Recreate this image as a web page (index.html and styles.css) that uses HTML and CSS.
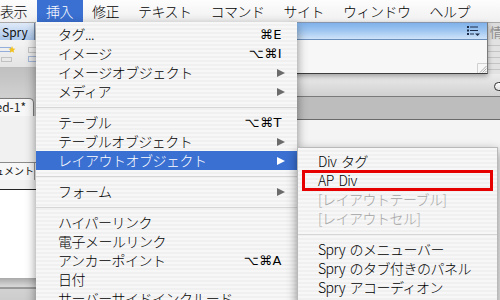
FILE: index.html
```html
<!doctype html>
<html>
<head>
<title>挿入メニュー</title>
<meta charset="utf-8">
<link rel="stylesheet" href="styles.css">
</head>
<body>
<div class="screen">
	<div class="menubar">
		<span>表示</span>
		<span class="on">挿入</span>
		<span>修正</span>
		<span>テキスト</span>
		<span>コマンド</span>
		<span>サイト</span>
		<span>ウィンドウ</span>
		<span>ヘルプ</span>
	</div>

	<div class="workspace">
		<div class="docside">
			<div class="insertbar"><span class="tab">Spry</span></div>
			<div class="tools">
				<svg width="40" height="18" viewBox="0 0 40 18">
					<rect x="-2.5" y="1.5" width="13" height="4" fill="none" stroke="#3a6ec8" stroke-dasharray="1 1"/>
					<path d="M12 0 l1 2.4 2.5 .3 -1.9 1.6 .6 2.5 -2.2 -1.3 -2.2 1.3 .6 -2.5 -1.9 -1.6 2.5 -.3z" fill="#f2c21e"/>
					<rect x="1.5" y="11.5" width="10" height="4" fill="none" stroke="#9a9a9a" stroke-dasharray="1 1"/>
					<rect x="28.5" y="1.5" width="11" height="5" fill="none" stroke="#9a9a9a" stroke-dasharray="1 1"/>
					<rect x="28.5" y="10.5" width="11" height="5" fill="none" stroke="#5b80c2" stroke-dasharray="1 1"/>
				</svg>
			</div>
			<div class="grayband"></div>
			<div class="doctabs"><span class="doctab">Untitled-1*</span></div>
			<div class="docbar"></div>
			<div class="titlebox"><span>ドキュメント</span></div>
			<div class="docgap"></div>
			<div class="docview"></div>
			<div class="status"></div>
		</div>

		<div class="panelside">
			<div class="phead"><span>情報</span></div>
			<div class="plines"></div>
			<div class="ptools"><span class="pill"></span></div>
			<div class="pdark"></div>
			<div class="prest"></div>
		</div>
	</div>

	<div class="floatpanel">
		<div class="fp-title">
			<svg width="14" height="10" viewBox="0 0 14 10">
				<rect x="0" y="0" width="2" height="2" fill="#1c2c48"/>
				<rect x="3" y="0.5" width="8" height="1" fill="#1c2c48"/>
				<rect x="0" y="3.5" width="2" height="2" fill="#1c2c48"/>
				<rect x="3" y="4" width="8" height="1" fill="#1c2c48"/>
				<rect x="0" y="7" width="2" height="2" fill="#1c2c48"/>
				<rect x="3" y="7.5" width="4" height="1" fill="#1c2c48"/>
				<path d="M8 7.5 h5 l-2.5 2.5z" fill="#1c2c48"/>
			</svg>
		</div>
		<div class="fp-body">
			<svg class="grip" width="10" height="10" viewBox="0 0 10 10">
				<path d="M0.5 10 V0.5 H10" fill="none" stroke="#d0d0d0"/>
				<path d="M3 9.5 L9.5 3 M5.5 9.5 L9.5 5.5 M8 9.5 L9.5 8" stroke="#9a9a9a" stroke-width="0.8"/>
			</svg>
		</div>
	</div>

	<div class="menu main">
		<div class="item">タグ...<span class="key">⌘E</span></div>
		<div class="item">イメージ<span class="key">⌥⌘I</span></div>
		<div class="item">イメージオブジェクト<span class="arrow"></span></div>
		<div class="item">メディア<span class="arrow"></span></div>
		<div class="sep"></div>
		<div class="item">テーブル<span class="key">⌥⌘T</span></div>
		<div class="item">テーブルオブジェクト<span class="arrow"></span></div>
		<div class="item sel">レイアウトオブジェクト<span class="arrow"></span></div>
		<div class="sep"></div>
		<div class="item">フォーム<span class="arrow"></span></div>
		<div class="sep"></div>
		<div class="item">ハイパーリンク</div>
		<div class="item">電子メールリンク</div>
		<div class="item">アンカーポイント<span class="key">⌥⌘A</span></div>
		<div class="item">日付</div>
		<div class="item">サーバーサイドインクルード</div>
	</div>

	<div class="menu sub">
		<div class="item">Div タグ</div>
		<div class="item marked">AP Div</div>
		<div class="item off">[レイアウトテーブル]</div>
		<div class="item off">[レイアウトセル]</div>
		<div class="sep"></div>
		<div class="item">Spry のメニューバー</div>
		<div class="item">Spry のタブ付きのパネル</div>
		<div class="item">Spry アコーディオン</div>
		<div class="item">Spry 折りたたみパネル</div>
	</div>
</div>
</body>
</html>
```

FILE: styles.css
```css
html,body{margin:0;padding:0;}
body{width:500px;height:300px;overflow:hidden;font-family:"Noto Sans CJK JP",sans-serif;background:#d6d6d6;}

.screen{position:relative;width:500px;height:300px;overflow:hidden;display:flex;flex-direction:column;}

/* menu bar */
.menubar{flex:none;height:22px;display:flex;background:linear-gradient(#fdfdfd,#f0f0f0);border-bottom:1px solid #a9a9a9;font-size:14px;font-weight:300;letter-spacing:-0.5px;line-height:22px;color:#000;white-space:nowrap;}
.menubar span{padding:0 9.5px;}
.menubar span:first-child{margin-left:-9.5px;}
.menubar .on{background:#3a70d2;color:#fff;}

.workspace{flex:1;min-height:0;display:grid;grid-template-columns:290px 1fr;}

/* document side */
.docside{display:flex;flex-direction:column;min-height:0;}
.insertbar{flex:none;height:17px;display:flex;background:#cfcfcf;}
.insertbar .tab{width:32px;padding-left:2px;background:linear-gradient(#dfeaf8,#a8c5ea);border-right:1px solid #6c83a4;font-size:12px;line-height:17px;color:#111;}
.tools{flex:none;height:28px;box-sizing:border-box;padding-top:6px;background:linear-gradient(#f4f4f4,#e4e4e4);border-bottom:1px solid #bdbdbd;}
.tools svg{display:block;}
.grayband{flex:none;height:29px;background:linear-gradient(#c0c0c0,#d0d0d0);}
.doctabs{flex:none;height:19px;display:flex;align-items:flex-end;background:#cdcdcd;}
.doctab{width:34px;height:18px;box-sizing:border-box;padding-right:7px;display:flex;justify-content:flex-end;overflow:hidden;white-space:nowrap;background:#f7f7f7;border-top:1px solid #7c7c7c;border-right:1px solid #7c7c7c;border-top-right-radius:5px;font-size:12px;line-height:16px;color:#222;}
.docbar{flex:none;height:46px;background:#f1f1f1;}
.titlebox{flex:none;height:18px;box-sizing:border-box;border-top:1px solid #8a8a8a;background:#f7f7f7;display:flex;}
.titlebox span{width:34px;display:flex;justify-content:flex-end;overflow:hidden;white-space:nowrap;font-size:10px;line-height:16px;color:#111;border-right:1px solid #9a9a9a;}
.docgap{flex:none;height:9px;background:#f1f1f1;}
.docview{flex:none;height:88px;background:#fff;border-top:1px solid #222;}
.status{flex:1;background:linear-gradient(#a9a9a9,#d6d6d6 8px,#d6d6d6 9px,#5e5e5e 10px,#d2d2d2 11px,#cdcdcd);}

/* panel side */
.panelside{display:flex;flex-direction:column;min-height:0;}
.phead{flex:none;height:17px;background:#dcdcdc;font-size:13px;line-height:17px;color:#8d8d8d;white-space:nowrap;overflow:hidden;}
.phead span{padding-left:200px;}
.plines{flex:none;height:34px;background:repeating-linear-gradient(#e2e2e2 0 5px,#c4c4c4 5px 6px);}
.ptools{flex:none;height:22px;display:flex;justify-content:flex-end;align-items:center;background:linear-gradient(#ececec,#d0d0d0);}
.pill{width:19px;height:9px;box-sizing:border-box;margin:3px 3px 0 0;border:1.5px solid #333;border-radius:5px;background:linear-gradient(#fff,#ddd);}
.pdark{flex:none;height:22px;background:#bdbdbd;border-top:1px solid #7a7a7a;border-bottom:1px solid #6a6a6a;}
.prest{flex:1;background:#f4f4f4;}

/* floating panel */
.floatpanel{position:absolute;left:290px;top:22px;width:198px;height:52px;box-sizing:border-box;display:flex;flex-direction:column;border-top:1px solid #8796ad;border-right:1px solid #7a7a7a;border-bottom:1px solid #3c3c3c;box-shadow:0 2px 5px rgba(0,0,0,0.35);}
.fp-title{flex:none;height:17px;box-sizing:border-box;display:flex;justify-content:flex-end;align-items:center;padding-right:6px;background:linear-gradient(#7fb1ea,#9cc4f0 45%,#cfe3f9);border-bottom:1px solid #6b8fbb;}
.fp-body{flex:1;display:flex;justify-content:flex-end;align-items:flex-end;background:#f7f7f7;}
.grip{display:block;}

/* menus */
.menu{position:absolute;box-sizing:border-box;background:repeating-linear-gradient(#f7f7f7 0 2px,#f0f0f0 2px 4px);font-size:14px;font-weight:300;letter-spacing:-0.5px;color:#000;white-space:nowrap;box-shadow:0 4px 10px rgba(0,0,0,0.45);}
.menu.main{left:36px;top:22px;width:261px;height:300px;padding-top:3px;}
.menu.sub{left:297px;top:147px;width:201px;height:170px;padding-top:4px;border:1px solid #b9b9b9;word-spacing:2px;}
.item{height:19px;line-height:19px;display:flex;align-items:center;padding:0 15px 0 22px;}
.sub .item{padding-left:20px;}
.item.sel{background:#3a70d2;color:#fff;}
.item.off{color:#a4a4a4;}
.key{margin-left:auto;font-family:"DejaVu Sans",sans-serif;font-size:13px;font-weight:normal;letter-spacing:0.5px;}
.arrow{margin-left:auto;margin-right:-3px;width:0;height:0;border-left:8px solid #6b6b6b;border-top:4.5px solid transparent;border-bottom:4.5px solid transparent;}
.sel .arrow{border-left-color:#fff;}
.sep{height:12px;display:flex;align-items:center;}
.sep::before{content:"";flex:1;height:1px;background:#d6d6d6;}

/* annotation */
.marked{position:relative;}
.marked::after{content:"";position:absolute;left:4px;right:4px;top:-1px;bottom:-1px;border:3px solid #e60000;}
```
